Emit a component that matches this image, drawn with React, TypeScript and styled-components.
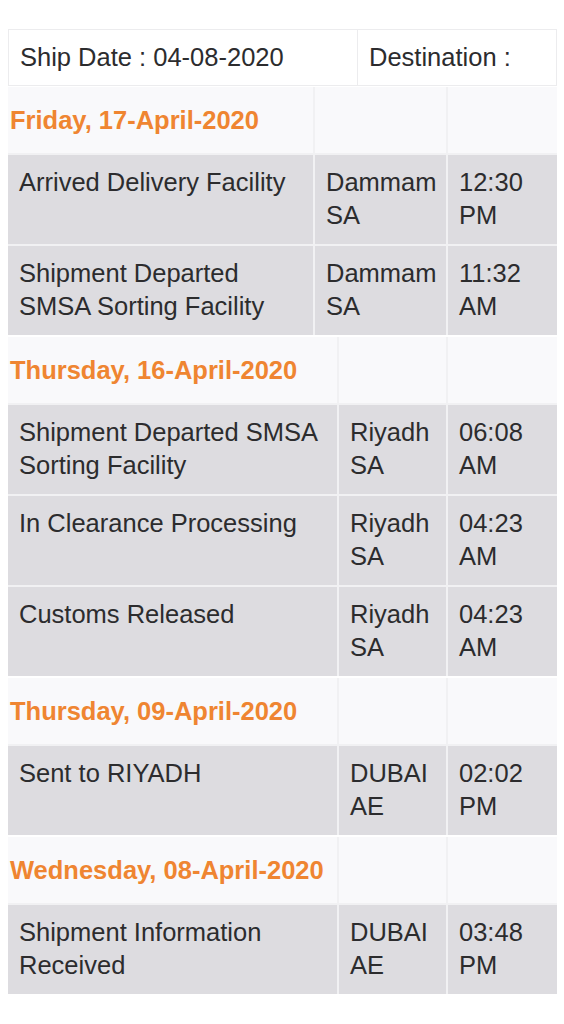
import React from "react";
import styled, { createGlobalStyle } from "styled-components";

type Event = { text: string; place: string; time: string };
type Day = { date: string; cols: string; events: Event[] };

const days: Day[] = [
  {
    date: "Friday, 17-April-2020",
    cols: "305px 131px 1fr",
    events: [
      { text: "Arrived Delivery Facility", place: "Dammam SA", time: "12:30 PM" },
      { text: "Shipment Departed SMSA Sorting Facility", place: "Dammam SA", time: "11:32 AM" },
    ],
  },
  {
    date: "Thursday, 16-April-2020",
    cols: "329px 107px 1fr",
    events: [
      { text: "Shipment Departed SMSA Sorting Facility", place: "Riyadh SA", time: "06:08 AM" },
      { text: "In Clearance Processing", place: "Riyadh SA", time: "04:23 AM" },
      { text: "Customs Released", place: "Riyadh SA", time: "04:23 AM" },
    ],
  },
  {
    date: "Thursday, 09-April-2020",
    cols: "329px 107px 1fr",
    events: [{ text: "Sent to RIYADH", place: "DUBAI AE", time: "02:02 PM" }],
  },
  {
    date: "Wednesday, 08-April-2020",
    cols: "329px 107px 1fr",
    events: [{ text: "Shipment Information Received", place: "DUBAI AE", time: "03:48 PM" }],
  },
];

const App: React.FC = () => {
  return (
    <>
      <GlobalStyle />
      <Page>
        <Header>
          <HeaderCell>Ship Date : 04-08-2020</HeaderCell>
          <HeaderCell $last>Destination :</HeaderCell>
        </Header>
        {days.map((d) => (
          <Section key={d.date} $cols={d.cols}>
            <DayCell>{d.date}</DayCell>
            <DayBlank />
            <DayBlank />
            {d.events.map((e, i) => (
              <React.Fragment key={i}>
                <Cell>{e.text}</Cell>
                <Cell>{e.place}</Cell>
                <Cell>{e.time}</Cell>
              </React.Fragment>
            ))}
          </Section>
        ))}
      </Page>
    </>
  );
};

const GlobalStyle = createGlobalStyle`
  body {
    margin: 0;
    background: #ffffff;
    font-family: "Liberation Sans", Arial, Helvetica, sans-serif;
  }
`;

const Page = styled.div`
  width: 549px;
  margin-left: 8px;
  padding-top: 29px;
  display: flex;
  flex-direction: column;
  gap: 2px;
  font-size: 25.5px;
  line-height: 33px;
  color: #2c2c2e;
`;

const Header = styled.div`
  display: grid;
  grid-template-columns: 348px 1fr;
  border: 1px solid #ececee;
  background: #ffffff;
  margin-bottom: -1px;
`;

const HeaderCell = styled.div<{ $last?: boolean }>`
  padding: 11px 0 11px ${(p) => (p.$last ? "11px" : "11px")};
  border-left: ${(p) => (p.$last ? "1px solid #ececee" : "none")};
  white-space: nowrap;
`;

const Section = styled.div<{ $cols: string }>`
  display: grid;
  grid-template-columns: ${(p) => p.$cols};
  gap: 2px;
  background: #f1f1f3;
`;

const DayCell = styled.div`
  height: 66px;
  display: flex;
  align-items: center;
  padding-left: 2px;
  background: #f9f9fb;
  color: #ef8531;
  font-weight: bold;
  white-space: nowrap;
`;

const DayBlank = styled.div`
  background: #f9f9fb;
`;

const Cell = styled.div`
  background: #dddce0;
  min-height: 66px;
  padding: 11px 6px 12px 11px;
`;

export default App;
